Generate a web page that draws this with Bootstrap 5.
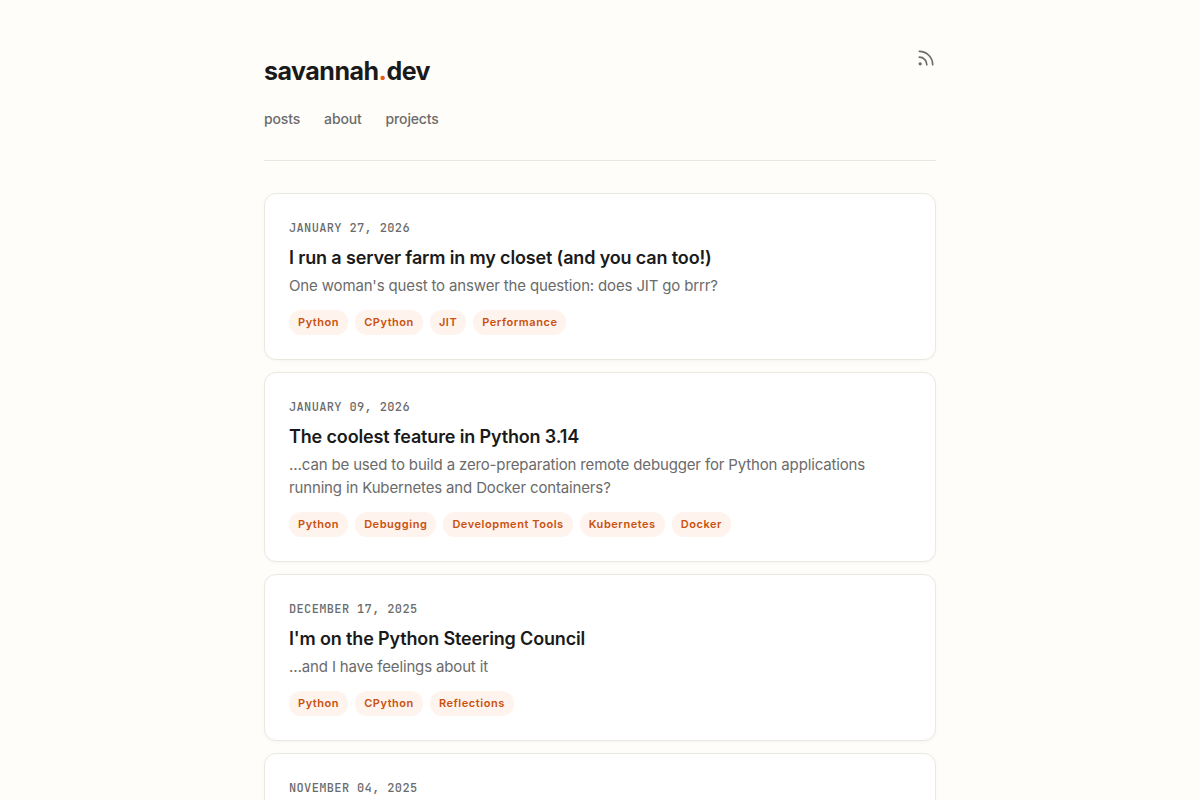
<!DOCTYPE html>
<html lang="en">
<head>
<meta charset="utf-8">
<meta name="viewport" content="width=device-width, initial-scale=1">
<title>savannah.dev</title>
<link href="https://cdn.jsdelivr.net/npm/bootstrap@5.3.0/dist/css/bootstrap.min.css" rel="stylesheet">
<style>
html{scrollbar-width:none}
body{background:#fffdfa;color:#1a1a1a;font-family:Inter,sans-serif;font-size:15px;line-height:23px;letter-spacing:-.01em}
.page{max-width:720px;padding:48px 24px}
.site-head{padding-bottom:30px;margin-bottom:32px;border-bottom:1px solid #ebe8e2}
.brand{font-size:25px;line-height:46px;font-weight:700;letter-spacing:-.02em;color:#1a1a1a;text-decoration:none}
.brand span{color:#e8590c}
.site-nav{gap:24px;margin-top:14px}
.site-nav a{font-size:14px;line-height:22px;font-weight:500;color:#6b6b6b;text-decoration:none}
.feed{color:#6b6b6b;line-height:0}
.post-list{gap:12px}
.post{border:1px solid #ebe8e2;border-radius:12px;padding:24px;background:#fff;box-shadow:0 1px 3px rgba(0,0,0,.04)}
.post time{font-family:"JetBrains Mono","Liberation Mono",monospace;font-size:12px;line-height:20px;font-weight:500;letter-spacing:.03em;color:#6b6b6b;text-transform:uppercase}
.post h2{font-size:18px;line-height:24px;font-weight:600;margin:8px 0 4px}
.post h2 a{color:#1a1a1a;text-decoration:none}
.post p{color:#6b6b6b;margin:0 0 13px}
.tags{gap:7px}
.tag{font-size:11px;line-height:16px;font-weight:600;letter-spacing:.05em;color:#c9510c;background:#fff3ee;border-radius:12px;padding:4px 9px 5px;text-decoration:none}
</style>
</head>
<body>
<div class="page container-fluid mx-auto">
  <header class="site-head">
    <div class="d-flex justify-content-between align-items-start">
      <a class="brand" href="#">savannah<span>.</span>dev</a>
      <a class="feed" href="#" aria-label="RSS feed"><svg width="20" height="20" viewBox="0 0 24 24" fill="none" stroke="currentColor" stroke-width="2" stroke-linecap="round" stroke-linejoin="round"><path d="M4 11a9 9 0 0 1 9 9M4 4a16 16 0 0 1 16 16"/><circle cx="5" cy="19" r="1"/></svg></a>
    </div>
    <nav class="site-nav d-flex"><a href="#">posts</a><a href="#">about</a><a href="#">projects</a></nav>
  </header>
  <main class="post-list d-flex flex-column">
    <article class="post">
      <time class="d-block" datetime="2026-01-27">January 27, 2026</time>
      <h2><a href="#">I run a server farm in my closet (and you can too!)</a></h2>
      <p>One woman's quest to answer the question: does JIT go brrr?</p>
      <div class="tags d-flex flex-wrap"><a class="tag" href="#">Python</a><a class="tag" href="#">CPython</a><a class="tag" href="#">JIT</a><a class="tag" href="#">Performance</a></div>
    </article>
    <article class="post">
      <time class="d-block" datetime="2026-01-09">January 09, 2026</time>
      <h2><a href="#">The coolest feature in Python 3.14</a></h2>
      <p>…can be used to build a zero-preparation remote debugger for Python applications running in Kubernetes and Docker containers?</p>
      <div class="tags d-flex flex-wrap"><a class="tag" href="#">Python</a><a class="tag" href="#">Debugging</a><a class="tag" href="#">Development Tools</a><a class="tag" href="#">Kubernetes</a><a class="tag" href="#">Docker</a></div>
    </article>
    <article class="post">
      <time class="d-block" datetime="2025-12-17">December 17, 2025</time>
      <h2><a href="#">I'm on the Python Steering Council</a></h2>
      <p>…and I have feelings about it</p>
      <div class="tags d-flex flex-wrap"><a class="tag" href="#">Python</a><a class="tag" href="#">CPython</a><a class="tag" href="#">Reflections</a></div>
    </article>
    <article class="post">
      <time class="d-block" datetime="2025-11-04">November 04, 2025</time>
    </article>
  </main>
</div>
<script src="https://cdn.jsdelivr.net/npm/bootstrap@5.3.0/dist/js/bootstrap.bundle.min.js"></script>
</body>
</html>
